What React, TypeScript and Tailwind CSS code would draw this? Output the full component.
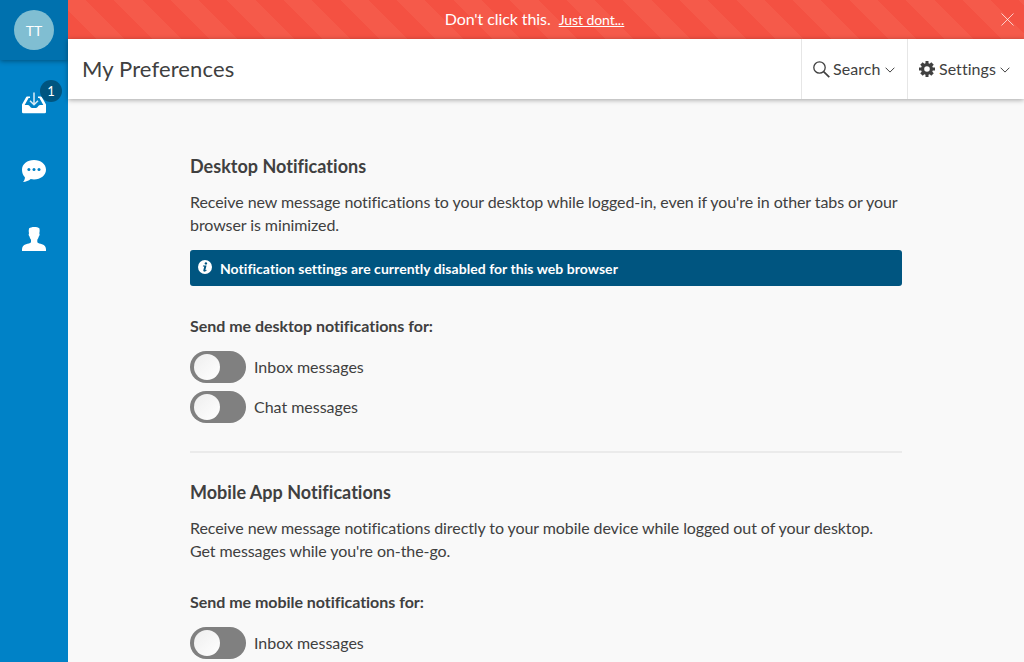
import type { ReactNode } from "react";

function InboxIcon() {
  return (
    <svg width="24" height="22" viewBox="0 0 24 22" fill="none">
      <path
        fill="#fff"
        d="M5.200 4.600h2.800v1.300H6.600L2.700 13H6c1.800 0 2.200 3 4 3h4c1.800 0 2.200-3 4-3h3.300l-3.900-7.100H16V4.600h2.800c.7 0 1 .3 1.300.8L24 12.600V20a1.300 1.300 0 0 1-1.300 1.300H1.300A1.300 1.300 0 0 1 0 20v-7.400l3.900-7.200c.3-.5.600-.8 1.300-.8z"
      />
      <path stroke="#fff" strokeOpacity=".85" strokeWidth="1.500" d="M12 .500v12M8 8.700l4 4 4-4" />
    </svg>
  );
}

function ChatIcon() {
  return (
    <svg width="24" height="24" viewBox="0 0 24 24">
      <path
        fill="#fff"
        d="M12 1c6.700 0 12 4.200 12 9.700s-5.300 9.700-12 9.700c-1.200 0-2.300-.1-3.300-.3C6.800 21.800 3.700 23 1 23c1.300-1.300 2-2.900 1.900-4.700C1.100 16.500 0 13.700 0 10.700 0 5.200 5.300 1 12 1z"
      />
      <g fill="#0082c7">
        <circle cx="6.900" cy="10.500" r="1.500" />
        <circle cx="12" cy="10.500" r="1.500" />
        <circle cx="17" cy="10.500" r="1.500" />
      </g>
    </svg>
  );
}

function UserIcon() {
  return (
    <svg width="24" height="24" viewBox="0 0 24 24">
      <path
        fill="#fff"
        d="M7 1.500C8.200.5 10 0 12.200 0s4 .4 5.300 1.400c.3 1.600.2 3.300-.2 5 .6.200.4 2.300-.5 3.100-.3 1.400-.8 2.500-1.500 3.300v2.500c1 1.100 2.700 1.300 4.700 2 2.800.9 4 2.700 4 5.200V24H0v-1.500c0-2.500 1.200-4.300 4-5.200 2-.7 4-.9 5-2v-2.500c-.8-.8-1.300-1.900-1.500-3.300-.9-.8-1.100-2.900-.5-3.100-.4-1.700-.4-3.300 0-4.900z"
      />
    </svg>
  );
}

function SearchIcon() {
  return (
    <svg width="17" height="17" viewBox="0 0 17 17" fill="none" stroke="#404040">
      <circle cx="6.500" cy="6.500" r="5.700" strokeWidth="1.300" />
      <path strokeWidth="1.700" d="M10.600 10.600l5.700 5.500" />
    </svg>
  );
}

function GearIcon() {
  return (
    <svg width="16" height="16" viewBox="0 0 16 16" fill="#404040">
      <path
        fillRule="evenodd"
        d="M6.500 0h3v2.200l1.200.5 1.600-1.500 2.500 2.500-1.500 1.600.5 1.200H16v3h-2.200l-.5 1.200 1.500 1.600-2.500 2.500-1.600-1.500-1.200.5V16h-3v-2.200l-1.200-.5-1.600 1.500-2.500-2.500 1.500-1.600-.5-1.200H0v-3h2.200l.5-1.200-1.500-1.600 2.500-2.500 1.600 1.500 1.200-.5zM8 5.200a2.800 2.800 0 1 0 0 5.600 2.800 2.800 0 0 0 0-5.600z"
      />
    </svg>
  );
}

function Chevron() {
  return (
    <svg width="10" height="6" viewBox="0 0 10 6" fill="none" stroke="#404040" strokeWidth="1" className="mt-[2px]">
      <path d="M.6.700L5 5.100 9.400.700" />
    </svg>
  );
}

function InfoIcon() {
  return (
    <svg width="14" height="14" viewBox="0 0 14 14" className="mb-[2px]">
      <circle cx="7" cy="7" r="7" fill="#fff" />
      <circle cx="7.900" cy="3.400" r="1.200" fill="#005580" />
      <path
        fill="#005580"
        d="M5 5.600h3.500L7.400 9.900c-.1.400.2.500.9-.1l.4.400c-1 1.200-1.900 1.600-2.700 1.400-.7-.2-.8-.8-.6-1.500l.9-3.700H4.900z"
      />
    </svg>
  );
}

function Toggle({ label }: { label: string }) {
  return (
    <label className="flex h-8 items-center gap-2">
      <span className="flex h-8 w-14 items-center rounded-full bg-[#808080] pl-1">
        <span className="size-[26px] rounded-full bg-linear-to-br from-[#eeeeee] to-white" />
      </span>
      <span className="text-base tracking-[-0.02px]">{label}</span>
    </label>
  );
}

function Section({ title, children }: { title: string; children: ReactNode }) {
  return (
    <section>
      <h2 className="text-[18px] leading-6 font-bold tracking-[0.02px]">{title}</h2>
      {children}
    </section>
  );
}

export default function App() {
  return (
    <div className="flex h-[662px] w-[1024px] overflow-hidden bg-[#f9f9f9] font-['Lato',sans-serif] text-[#404040]">
      <aside className="flex w-[68px] shrink-0 flex-col items-center bg-[#0082c7]">
        <div className="flex h-[60px] w-full items-center justify-center bg-[#0071ae] shadow-[0_1px_5px_rgba(0,0,0,0.4)]">
          <div className="flex size-10 items-center justify-center rounded-full bg-[#80bed2] text-[14px] text-white">
            TT
          </div>
        </div>
        <div className="relative mt-8">
          <InboxIcon />
          <span className="absolute -top-3 left-[18px] flex size-[22px] items-center justify-center rounded-full bg-[#005580] pt-[2px] text-[13px] text-white">
            1
          </span>
        </div>
        <div className="mt-[45px]">
          <ChatIcon />
        </div>
        <div className="mt-[44px]">
          <UserIcon />
        </div>
      </aside>

      <div className="flex min-w-0 flex-1 flex-col">
        <div className="flex h-[39px] shrink-0 items-center bg-[repeating-linear-gradient(45deg,#f45142,#f45142_20px,#f55a4a_20px,#f55a4a_40px)] text-white">
          <p className="flex flex-1 items-baseline justify-center gap-2 pb-[2px] text-base tracking-[-0.08px]">
            Don't click this.
            <a className="text-sm underline" href="#">
              Just dont...
            </a>
          </p>
          <button className="mr-[10px]" aria-label="Close">
            <svg width="13" height="13" viewBox="0 0 13 13" stroke="#fff" strokeOpacity=".7" className="block">
              <path d="M.5.500l12 12M12.500.500l-12 12" />
            </svg>
          </button>
        </div>

        <header className="flex h-[60px] shrink-0 items-stretch bg-white shadow-[0_1px_5px_rgba(0,0,0,0.35)]">
          <h1 className="flex flex-1 items-center pb-[2px] pl-[14px] text-[22px] tracking-[0.13px]">My Preferences</h1>
          <button className="flex w-[106px] items-center border-l border-[#e6e6e6] pl-[11px]">
            <SearchIcon />
            <span className="mr-[5px] ml-[3px] tracking-[0.05px]">Search</span>
            <Chevron />
          </button>
          <button className="flex w-[117px] items-center border-l border-[#e6e6e6] pl-[11px]">
            <GearIcon />
            <span className="mr-[4px] ml-[4px] tracking-[0.05px]">Settings</span>
            <Chevron />
          </button>
        </header>

        <main className="ml-[122px] w-[712px] pt-[55px]">
          <Section title="Desktop Notifications">
            <p className="mt-[12px] pr-[3px] leading-[23px] tracking-[-0.083px]">
              Receive new message notifications to your desktop while logged-in, even if you're in other tabs or your
              browser is minimized.
            </p>
            <div className="mt-[14px] flex h-9 items-center gap-2 rounded-[3px] bg-[#005580] pl-2 text-[14px] font-bold tracking-[0.04px] text-white">
              <InfoIcon />
              Notification settings are currently disabled for this web browser
            </div>
            <h3 className="mt-[28px] mb-[13px] leading-6 font-bold tracking-[-0.03px]">
              Send me desktop notifications for:
            </h3>
            <div className="flex flex-col gap-2">
              <Toggle label="Inbox messages" />
              <Toggle label="Chat messages" />
            </div>
          </Section>
          <hr className="mt-7 mb-[27px] border-t-2 border-[#ebebeb]" />
          <Section title="Mobile App Notifications">
            <p className="mt-[12px] pr-[3px] leading-[23px] tracking-[-0.083px]">
              Receive new message notifications directly to your mobile device while logged out of your desktop. Get
              messages while you're on-the-go.
            </p>
            <h3 className="mt-[28px] mb-[13px] leading-6 font-bold tracking-[-0.03px]">
              Send me mobile notifications for:
            </h3>
            <Toggle label="Inbox messages" />
          </Section>
        </main>
      </div>
    </div>
  );
}
